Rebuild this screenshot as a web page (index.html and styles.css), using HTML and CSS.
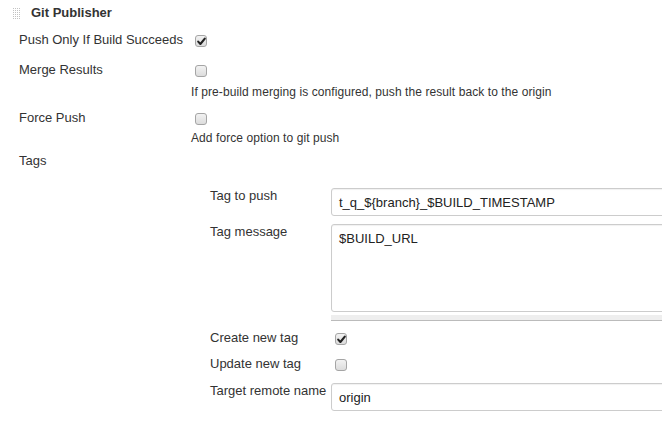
FILE: index.html
```html
<!DOCTYPE html>
<html>
<head>
<meta charset="utf-8">
<link rel="stylesheet" href="styles.css">
</head>
<body>
<div class="section">
  <div class="section-header">
    <span class="grip"></span>
    <span class="section-title">Git Publisher</span>
  </div>

  <div class="row row-first">
    <div class="label">Push Only If Build Succeeds</div>
    <div class="value"><span class="cb checked"><svg viewBox="0 0 13 13" width="13" height="13"><path d="M3.2 6.6 L5.4 9 L9.8 3.6" fill="none" stroke="#222" stroke-width="2.1" stroke-linecap="round" stroke-linejoin="round"/></svg></span></div>
  </div>

  <div class="row row-merge">
    <div class="label">Merge Results</div>
    <div class="value"><span class="cb"></span></div>
  </div>
  <div class="desc-row desc-merge">If pre-build merging is configured, push the result back to the origin</div>

  <div class="row row-force">
    <div class="label">Force Push</div>
    <div class="value"><span class="cb"></span></div>
  </div>
  <div class="desc-row desc-force">Add force option to git push</div>

  <div class="row row-tags">
    <div class="label">Tags</div>
  </div>

  <div class="nested">
    <div class="nrow nrow-push">
      <div class="nlabel">Tag to push</div>
      <div class="nvalue"><div class="text-input">t_q_${branch}_$BUILD_TIMESTAMP</div></div>
    </div>
    <div class="nrow nrow-msg">
      <div class="nlabel">Tag message</div>
      <div class="nvalue">
        <div class="text-area">$BUILD_URL</div>
        <div class="ta-handle"></div>
      </div>
    </div>
    <div class="nrow nrow-create">
      <div class="nlabel">Create new tag</div>
      <div class="nvalue"><span class="cb checked"><svg viewBox="0 0 13 13" width="13" height="13"><path d="M3.2 6.6 L5.4 9 L9.8 3.6" fill="none" stroke="#222" stroke-width="2.1" stroke-linecap="round" stroke-linejoin="round"/></svg></span></div>
    </div>
    <div class="nrow nrow-update">
      <div class="nlabel">Update new tag</div>
      <div class="nvalue"><span class="cb"></span></div>
    </div>
    <div class="nrow nrow-remote">
      <div class="nlabel">Target remote name</div>
      <div class="nvalue"><div class="text-input">origin</div></div>
    </div>
  </div>
</div>
</body>
</html>
```
FILE: styles.css
```css
html, body {
  margin: 0;
  padding: 0;
  background: #fff;
}
body {
  width: 662px;
  height: 429px;
  overflow: hidden;
  font-family: "Liberation Sans", Arial, sans-serif;
  font-size: 13px;
  line-height: 16px;
  color: #333;
}
.section-header {
  display: flex;
  align-items: center;
  height: 26px;
  padding-left: 12px;
}
.grip {
  width: 9px;
  height: 13px;
  margin-right: 10px;
  background-color: #c2c2c2;
  background-image:
    linear-gradient(90deg, #fff 1px, transparent 1px),
    linear-gradient(#fff 1px, transparent 1px);
  background-size: 2px 2px;
}
.section-title {
  font-weight: bold;
  color: #333;
}
.row {
  display: flex;
  align-items: flex-start;
}
.label {
  flex: 0 0 172px;
  padding-left: 19px;
  height: 16px;
}
.value {
  display: flex;
}
.row-first { padding-top: 6px; }
.row-merge { padding-top: 14px; }
.row-force { padding-top: 10px; }
.row-tags { padding-top: 7px; }
.desc-row {
  padding-left: 191px;
  font-size: 12px;
  line-height: 15px;
  letter-spacing: 0.08px;
}
.desc-merge { padding-top: 7px; }
.desc-force { padding-top: 5px; }
.cb {
  display: block;
  box-sizing: border-box;
  width: 12px;
  height: 12px;
  margin: 3px 0 0 4px;
  border: 1px solid #a5a5a5;
  border-radius: 3px;
  background: linear-gradient(#f2f2f2, #dcdcdc);
  position: relative;
}
.cb svg {
  position: absolute;
  left: -1px;
  top: -1px;
}
.nested {
  padding-top: 19px;
}
.nrow {
  display: flex;
  align-items: flex-start;
}
.nlabel {
  flex: 0 0 121px;
  padding-left: 210px;
  white-space: nowrap;
  height: 16px;
}
.nvalue {
  display: flex;
  flex-direction: column;
  flex: 0 0 340px;
}
.text-input {
  box-sizing: border-box;
  width: 340px;
  height: 28px;
  padding: 6px 7px;
  border: 1px solid #cccccc;
  border-radius: 3px;
  box-shadow: inset 0 1px 1px rgba(0,0,0,0.06);
  color: #222;
  font-size: 13px;
  line-height: 16px;
}
.text-area {
  box-sizing: border-box;
  width: 340px;
  height: 88px;
  padding: 6px 7px;
  border: 1px solid #cccccc;
  border-radius: 3px;
  box-shadow: inset 0 1px 1px rgba(0,0,0,0.06);
  color: #222;
}
.ta-handle {
  width: 340px;
  height: 5px;
  margin-top: 3px;
  background: #eeeeee;
  border-bottom: 1px solid #bbbbbb;
}
.nrow-msg { padding-top: 8px; }
.nrow-create { padding-top: 9px; }
.nrow-update { padding-top: 10px; }
.nrow-remote { padding-top: 11px; }
```
